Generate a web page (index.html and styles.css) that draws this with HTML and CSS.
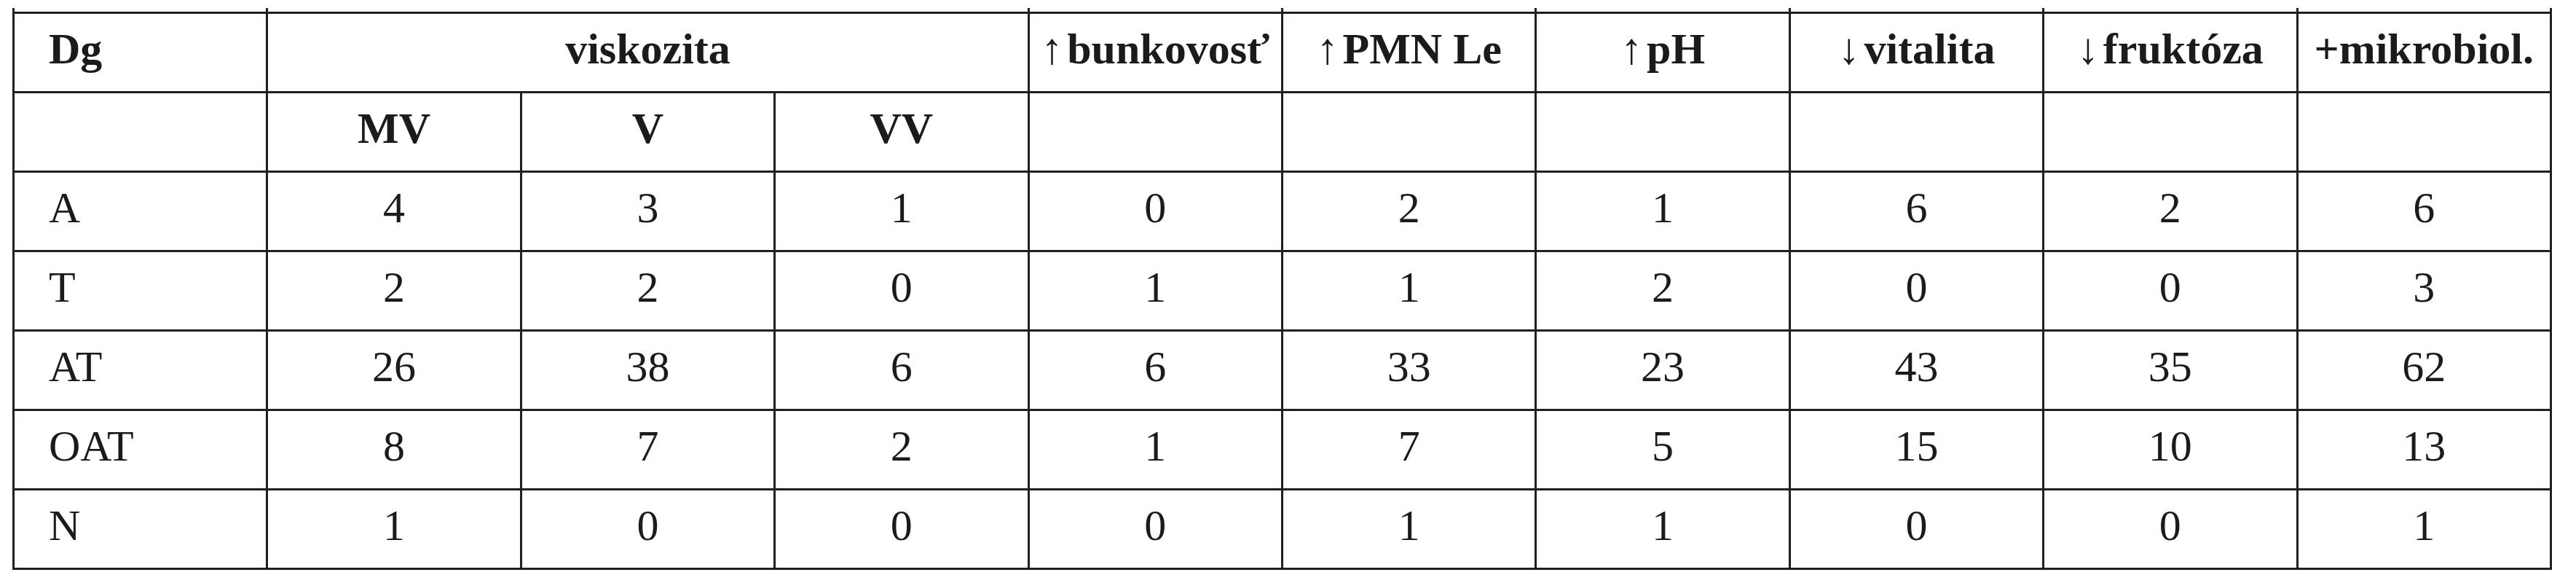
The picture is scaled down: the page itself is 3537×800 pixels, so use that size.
FILE: index.html
```html
<!DOCTYPE html>
<html lang="sk">
<head>
<meta charset="utf-8">
<title>Tabuľka</title>
<link rel="stylesheet" href="styles.css">
</head>
<body>
<table class="data">
  <colgroup>
    <col><col><col><col><col><col><col><col><col><col>
  </colgroup>
  <thead>
    <tr class="top">
      <th class="lead">Dg</th>
      <th colspan="3">viskozita</th>
      <th><span class="arr">↑</span>bunkovosť</th>
      <th><span class="arr">↑</span>PMN Le</th>
      <th><span class="arr">↑</span>pH</th>
      <th><span class="arr">↓</span>vitalita</th>
      <th><span class="arr">↓</span>fruktóza</th>
      <th>+mikrobiol.</th>
    </tr>
    <tr>
      <th class="lead"></th>
      <th>MV</th>
      <th>V</th>
      <th>VV</th>
      <th></th>
      <th></th>
      <th></th>
      <th></th>
      <th></th>
      <th></th>
    </tr>
  </thead>
  <tbody>
    <tr><td class="lead">A</td><td>4</td><td>3</td><td>1</td><td>0</td><td>2</td><td>1</td><td>6</td><td>2</td><td>6</td></tr>
    <tr><td class="lead">T</td><td>2</td><td>2</td><td>0</td><td>1</td><td>1</td><td>2</td><td>0</td><td>0</td><td>3</td></tr>
    <tr><td class="lead">AT</td><td>26</td><td>38</td><td>6</td><td>6</td><td>33</td><td>23</td><td>43</td><td>35</td><td>62</td></tr>
    <tr><td class="lead">OAT</td><td>8</td><td>7</td><td>2</td><td>1</td><td>7</td><td>5</td><td>15</td><td>10</td><td>13</td></tr>
    <tr class="bottom"><td class="lead">N</td><td>1</td><td>0</td><td>0</td><td>0</td><td>1</td><td>1</td><td>0</td><td>0</td><td>1</td></tr>
  </tbody>
</table>
</body>
</html>
```

FILE: styles.css
```css
html, body {
  margin: 0;
  padding: 0;
  background: #ffffff;
}

body {
  font-family: "Liberation Serif", "Times New Roman", serif;
  color: #1c1a1b;
}

.data {
  margin: 16px 0 0 17px;
  width: 3487px;
  table-layout: fixed;
  border-collapse: collapse;
  font-size: 60px;
  line-height: 60px;
}

.data tr {
  height: 109px;
}

.data th,
.data td {
  border: 3px solid #231f20;
  padding: 0 0 10px 0;
  text-align: center;
  vertical-align: middle;
  white-space: nowrap;
}

.data th {
  font-weight: bold;
}

.data td {
  font-weight: normal;
}

.data .lead {
  text-align: left;
  padding-left: 47px;
}

.arr {
  font-weight: normal;
  margin-right: 6px;
}

/* small overshoot of the vertical rules beyond the outer frame */
.top th,
.bottom td {
  position: relative;
}

.top th::before,
.top th:last-child::after,
.bottom td::before,
.bottom td:last-child::after {
  content: "";
  position: absolute;
  width: 3px;
  height: 5px;
  background: #231f20;
}

.top th::before,
.bottom td::before {
  left: -3px;
}

.top th:last-child::after,
.bottom td:last-child::after {
  right: -3px;
}

.top th::before,
.top th:last-child::after {
  top: -8px;
}

.bottom td::before,
.bottom td:last-child::after {
  bottom: -8px;
}
```
